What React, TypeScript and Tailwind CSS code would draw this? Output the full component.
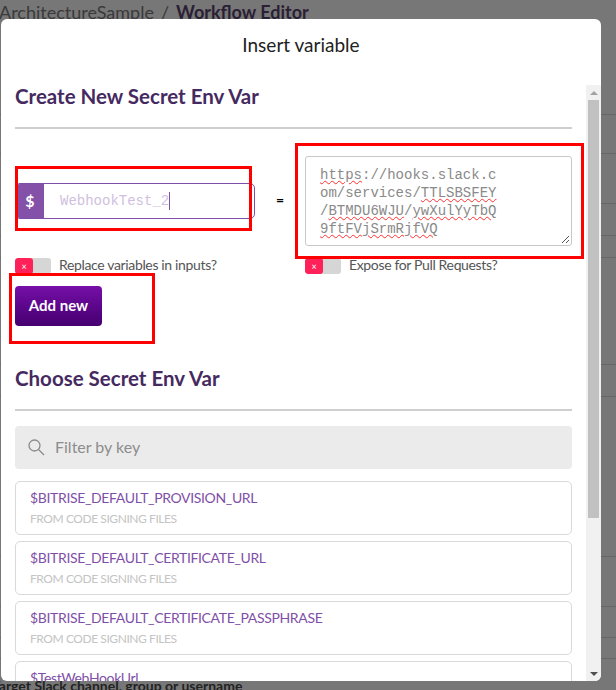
const font = "font-['Lato','Liberation_Sans',sans-serif]";
const squiggle = "underline decoration-wavy decoration-1 decoration-[#ff3030] underline-offset-1";
const pageRows = [91, 39, 50, 32, 22, 107, 32, 160, 50, 31, 21];

function Toggle() {
  return (
    <div className="flex h-[16px] w-[36px] overflow-hidden rounded-[3px] bg-[#d6d6d6]">
      <div className="flex w-[18px] items-center justify-center rounded-[3px] bg-[#ff2158] text-[9px] leading-none text-white">
        ×
      </div>
    </div>
  );
}

function SecretRow({ name }: { name: string }) {
  return (
    <div className="h-[54px] shrink-0 rounded-[5px] border border-[#d9d9d9] px-[14px] pt-[6px]">
      <div className="text-[14px] leading-[20px] tracking-[-0.35px] text-[#7f4fa8]">{name}</div>
      <div className="mt-[2px] text-[12px] leading-[18px] tracking-[-0.43px] text-[#c4c4c4]">FROM CODE SIGNING FILES</div>
    </div>
  );
}

const marks = "absolute border-[3px] border-[#ff0000]";

export default function App() {
  return (
    <div className={`relative h-[690px] w-[616px] overflow-hidden bg-[#777777] ${font}`}>
      <div className="flex h-[24px] items-center whitespace-nowrap text-[18px] text-[#3a3a3a]">
        <span className="-ml-[1px]">ArchitectureSample</span>
        <span className="mx-[7px]">/</span>
        <span className="font-bold text-[#2b1f35]">Workflow Editor</span>
      </div>

      {pageRows.map((h, i) => (
        <div key={i} className="border-b border-[#666666]" style={{ height: h }} />
      ))}

      <div className="-ml-[8px] mt-[22px] whitespace-nowrap text-[14px] font-bold leading-[9px] text-[#222222]">
        Target Slack channel, group or username
      </div>

      <div className="absolute left-[1px] top-[19px] flex h-[662px] w-[600px] flex-col overflow-hidden rounded-[6px] bg-white">
        <div className="flex h-[66px] shrink-0 items-center justify-center pb-[14px] text-[19px] text-[#222222]">
          Insert variable
        </div>
        <div className="flex min-h-0 flex-1">
          <div className="flex min-w-0 flex-1 flex-col overflow-hidden pl-[14px] pr-[14px]">
            <h2 className="text-[20.5px] font-bold leading-[22px] text-[#452a5f]">Create New Secret Env Var</h2>
            <div className="mt-[20px] h-[2px] shrink-0 bg-[#cfcfcf]" />

            <div className="mt-[27px] flex h-[90px] shrink-0 items-start">
              <div className="mt-[27px] flex h-[36px] w-[240px] overflow-hidden rounded-[5px] border border-[#7f4fa8]">
                <div className="flex w-[28px] items-center justify-center bg-[#8352a8] text-[16px] font-bold text-white">
                  $
                </div>
                <div className="flex items-center pl-[16px] font-['Liberation_Mono',monospace] text-[14px] text-[#d0bfe0]">
                  WebhookTest_2
                  <span className="h-[18px] w-px bg-[#7f4fa8]" />
                </div>
              </div>
              <div className="mt-[34px] w-[50px] text-center text-[14px] font-bold leading-[20px] text-black">=</div>
              <div className="relative h-[90px] w-[267px] rounded-[3px] border border-[#c8c8c8] px-[14px] pt-[9px] font-['Liberation_Mono',monospace] text-[14px] leading-[18px] text-[#8a8a8a]">
                <div className="whitespace-pre">
                  <span className={squiggle}>https</span>://hooks.slack.c
                </div>
                <div className="whitespace-pre">
                  om/services/<span className={squiggle}>TTLSBSFEY</span>
                </div>
                <div className="whitespace-pre">
                  /<span className={squiggle}>BTMDU6WJU</span>/<span className={squiggle}>ywXulYyTbQ</span>
                </div>
                <div className="whitespace-pre">
                  <span className={squiggle}>9ftFVjSrmRjfVQ</span>
                </div>
                <svg className="absolute bottom-[1px] right-[1px]" width="9" height="9" viewBox="0 0 9 9">
                  <path d="M1 8 8 1M5 8 8 5" stroke="#555555" strokeWidth="1" fill="none" />
                </svg>
              </div>
            </div>

            <div className="mt-[12px] flex h-[16px] shrink-0 items-center">
              <div className="flex w-[290px] items-center gap-[8px]">
                <Toggle />
                <span className="-mt-[3px] text-[14px] tracking-[-0.35px] text-[#555555]">Replace variables in inputs?</span>
              </div>
              <div className="flex items-center gap-[8px]">
                <Toggle />
                <span className="-mt-[3px] text-[14px] tracking-[-0.35px] text-[#555555]">Expose for Pull Requests?</span>
              </div>
            </div>

            <button className="mt-[12px] h-[40px] w-[87px] shrink-0 rounded-[4px] bg-gradient-to-b from-[#760fa8] to-[#450070] pb-[2px] text-[15px] font-bold text-white">
              Add new
            </button>

            <h2 className="mt-[41px] text-[20.5px] font-bold leading-[22px] text-[#452a5f]">Choose Secret Env Var</h2>
            <div className="mt-[20px] h-[2px] shrink-0 bg-[#cfcfcf]" />

            <div className="mt-[15px] flex h-[43px] shrink-0 items-center rounded-[4px] bg-[#ebebeb] pb-[2px] pl-[12px] text-[16px] text-[#8d8d8d]">
              <svg width="18" height="18" viewBox="0 0 18 18" fill="none" stroke="#8a8a8a" strokeWidth="1.3">
                <circle cx="7.5" cy="7.5" r="5.5" />
                <path d="M11.5 11.5 17 17" />
              </svg>
              <span className="ml-[10px]">Filter by key</span>
            </div>

            <div className="mt-[12px] flex flex-col gap-[6px]">
              <SecretRow name="$BITRISE_DEFAULT_PROVISION_URL" />
              <SecretRow name="$BITRISE_DEFAULT_CERTIFICATE_URL" />
              <SecretRow name="$BITRISE_DEFAULT_CERTIFICATE_PASSPHRASE" />
              <SecretRow name="$TestWebHookUrl" />
            </div>
          </div>

          <div className="flex w-[15px] shrink-0 flex-col items-center bg-[#f1f1f1]">
            <div className="flex h-[15px] items-center justify-center">
              <div className="h-0 w-0 border-x-[4px] border-b-[4px] border-x-transparent border-b-[#a3a3a3]" />
            </div>
            <div className="h-[418px] w-[11px] bg-[#c1c1c1]" />
            <div className="flex-1" />
            <div className="flex h-[15px] items-center justify-center">
              <div className="h-0 w-0 border-x-[4px] border-t-[4px] border-x-transparent border-t-[#505050]" />
            </div>
          </div>
        </div>
      </div>

      <div className={`${marks} left-[15px] top-[166px] h-[65px] w-[237px]`} />
      <div className={`${marks} left-[295px] top-[143px] h-[116px] w-[289px]`} />
      <div className={`${marks} left-[9px] top-[273px] h-[71px] w-[146px]`} />
    </div>
  );
}
